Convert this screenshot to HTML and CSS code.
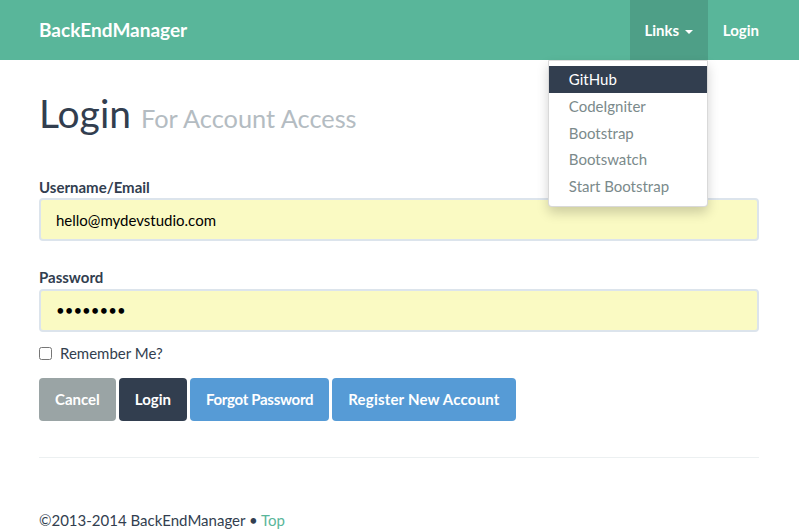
FILE: index.html
```html
<!DOCTYPE html>
<html lang="en">
<head>
<meta charset="utf-8">
<title>BackEndManager</title>
<link rel="stylesheet" href="styles.css">
</head>
<body>
<nav class="navbar">
  <div class="container nav-inner">
    <a class="brand" href="#">BackEndManager</a>
    <ul class="nav-right">
      <li class="dropdown open">
        <a class="nav-link active" href="#">Links <span class="caret"></span></a>
        <ul class="dropdown-menu">
          <li><a class="dd-item selected" href="#">GitHub</a></li>
          <li><a class="dd-item" href="#">CodeIgniter</a></li>
          <li><a class="dd-item" href="#">Bootstrap</a></li>
          <li><a class="dd-item" href="#">Bootswatch</a></li>
          <li><a class="dd-item" href="#">Start Bootstrap</a></li>
        </ul>
      </li>
      <li><a class="nav-link" href="#">Login</a></li>
    </ul>
  </div>
</nav>
<main class="container">
  <h1 class="page-title">Login <small>For Account Access</small></h1>
  <form class="login-form">
    <div class="form-group">
      <label class="field-label">Username/Email</label>
      <input class="form-control" type="text" value="hello@mydevstudio.com">
    </div>
    <div class="form-group">
      <label class="field-label">Password</label>
      <input class="form-control" type="password" value="password">
    </div>
    <div class="checkbox">
      <label><input type="checkbox"> Remember Me?</label>
    </div>
    <div class="btn-row">
      <button type="button" class="btn btn-cancel">Cancel</button>
      <button type="button" class="btn btn-login">Login</button>
      <button type="button" class="btn btn-info btn-forgot">Forgot Password</button>
      <button type="button" class="btn btn-info btn-register">Register New Account</button>
    </div>
  </form>
  <hr class="rule">
  <footer class="footer">©2013-2014 BackEndManager • <a href="#">Top</a></footer>
</main>
</body>
</html>
```
FILE: styles.css
```css
* { box-sizing: border-box; }
html, body { margin: 0; padding: 0; }
body {
  font-family: Lato, "Noto Sans", sans-serif;
  font-size: 15px;
  line-height: 1.42857;
  color: #323e4f;
  background: #fff;
}
a { text-decoration: none; }
.container { width: 720px; margin: 0 40px 0 39px; }

.navbar { background: #59b69a; height: 60px; }
.nav-inner { display: flex; justify-content: space-between; align-items: stretch; height: 60px; }
.brand { color: #fff; font-weight: 700; font-size: 19px; line-height: 60px; }
.nav-right { list-style: none; margin: 0 -15px 0 0; padding: 0; display: flex; }
.nav-right > li { position: relative; }
.nav-link { display: block; padding: 0 15px; line-height: 60px; color: #fff; font-weight: 700; font-size: 15px; }
.nav-link.active { background: #4e9f87; }
.caret {
  display: inline-block; width: 0; height: 0; margin-left: 2px; vertical-align: middle;
  border-top: 4px solid #fff; border-left: 4px solid transparent; border-right: 4px solid transparent;
}
.dropdown-menu {
  position: absolute; top: 100%; right: 0; min-width: 160px;
  list-style: none; margin: 0; padding: 5px 0 6px;
  background: #fff; border: 1px solid rgba(0,0,0,0.15); border-top-color: #ddd;
  border-radius: 0 0 4px 4px;
  box-shadow: 0 6px 12px rgba(0,0,0,0.175);
}
.dd-item { display: block; padding: 3px 20px; line-height: 20.75px; color: #7b8a8b; white-space: nowrap; }
.dd-item.selected { background: #323e4f; color: #fff; }

.page-title { font-size: 39px; font-weight: 400; line-height: 1.1; margin: 32px 0 0; color: #323e4f; }
.page-title small { font-size: 65%; color: #b4bcc2; font-weight: 400; }

.login-form { margin-top: 42px; }
.form-group { margin-bottom: 26px; }
.field-label { display: block; font-weight: 700; margin-bottom: 0; }
.form-control {
  display: block; width: 100%; height: 43px; padding: 10px 15px;
  font-family: inherit; font-size: 15px; color: #000;
  background: #fafac3; border: 2px solid #dce4ec; border-radius: 4px; outline: none;
}
.checkbox { margin: -15px 0 14px; }
.checkbox label { display: flex; align-items: center; gap: 8px; }
.checkbox input { margin: 0; width: 13px; height: 13px; }
.btn-row { display: flex; gap: 3px; }
.btn {
  height: 43px; padding: 10px 16px; font-family: inherit; font-size: 15px; line-height: 21px;
  font-weight: 700; color: #fff; border: 0; border-radius: 4px;
}
.btn-forgot { letter-spacing: -0.3px; }
.btn-register { letter-spacing: 0.2px; }
.btn-cancel { background: #9aa4a5; }
.btn-login { background: #323e4f; }
.btn-info { background: #569bd6; }
.rule { border: 0; border-top: 1px solid #ecf0f1; margin: 36px 0 52px; }
.footer { line-height: 21px; }
.footer a { color: #59b69a; }
```
